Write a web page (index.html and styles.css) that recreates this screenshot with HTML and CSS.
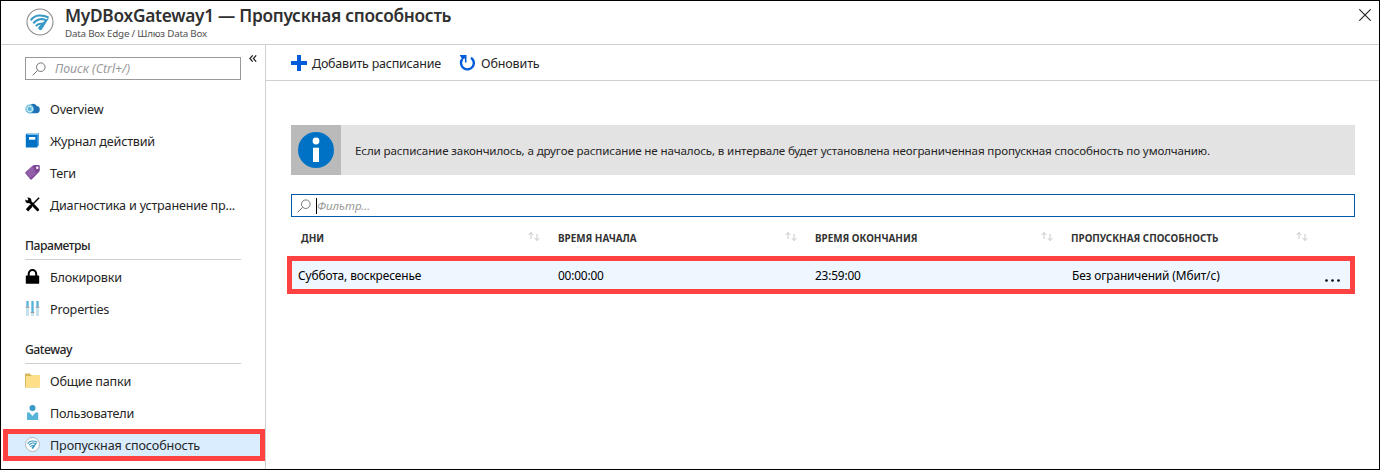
FILE: index.html
```html
<!DOCTYPE html>
<html lang="ru">
<head>
<meta charset="utf-8">
<title>MyDBoxGateway1 — Пропускная способность</title>
<link rel="stylesheet" href="styles.css">
</head>
<body>
<svg width="0" height="0" class="defs">
  <symbol id="search" viewBox="0 0 14 14"><circle cx="8.8" cy="5.2" r="4.3"/><path d="M5.7 8.3 0.6 13.4"/></symbol>
  <symbol id="wifi" viewBox="0 0 28 28">
    <circle cx="14" cy="14" r="13" fill="#fff" stroke="#8c8c8c" stroke-width="1.1"/>
    <g fill="none" stroke="#3999c6" stroke-width="2.1">
      <path d="M4.800 12.300Q8 7.800 13 7.500T22.500 9.500"/><path d="M7.300 15.400Q10 11.900 14 11.300T20.500 12.500"/><path d="M9.900 18.100Q12 15.400 17.500 15.500"/>
    </g>
    <path d="M23.300 9.500 16.300 20.700A2 2 0 1 1 13 18.600L20 11.500Z" fill="#3999c6"/>
  </symbol>
  <symbol id="sort" viewBox="0 0 12 9"><path d="M3 7V.5M.6 3 3 .5 5.400 3M9 2V8.500M6.600 6 9 8.500 11.400 6" fill="none" stroke="#c4c4c4" stroke-width=".9"/></symbol>
</svg>
<div class="window">
  <header class="header">
    <svg class="logo"><use href="#wifi"/></svg>
    <div class="titles">
      <h1 class="title">MyDBoxGateway1 — Пропускная способность</h1>
      <p class="subtitle">Data Box Edge / Шлюз Data Box</p>
    </div>
    <svg class="close" viewBox="0 0 12 12"><path d="M.3.3 11.700 11.700M11.700.3.3 11.700" stroke="#222" stroke-width="1.100"/></svg>
  </header>
  <div class="body">
    <nav class="sidebar">
      <div class="search-row">
        <div class="search"><svg class="search-icon"><use href="#search"/></svg><span>Поиск (Ctrl+/)</span></div>
        <svg class="collapse" viewBox="0 0 8 7"><path d="M3.700.3.900 3.500 3.700 6.700M7.200.3 4.400 3.500 7.200 6.700" fill="none" stroke="#222" stroke-width="1.200"/></svg>
      </div>
      <ul class="menu">
        <li class="item"><svg class="icon" viewBox="0 0 15 15"><path d="M5 12.200V4.500Q6 2.500 8.500 2.700 11 3 11.700 5 14.800 5.300 14.800 8.700 14.700 12 11.500 12.200Z" fill="#1f6fb5"/><circle cx="4.700" cy="8" r="4.400" fill="#59b4d9"/><circle cx="4.700" cy="8" r="2.700" fill="none" stroke="#e6f5fc" stroke-width="1.500" stroke-dasharray="1.500 .6"/></svg><span>Overview</span></li>
        <li class="item"><svg class="icon" viewBox="0 0 15 15"><path d="M2.500 0H14V13H2.500Z" fill="#59a7dc"/><path d="M.8 1.500Q.8.5 2.500.5V1.500H12.500V14.500H.8Z" fill="#0072c6"/><path d="M2.500 1H13" stroke="#d9ecf8"/><path d="M4 4H10.300V6.700H4Z" fill="#fff"/></svg><span>Журнал действий</span></li>
        <li class="item"><svg class="icon" viewBox="0 0 15 15"><path d="M.4 7.300 7.300.9Q8.200.1 9.500.1H13.500Q14.800.1 14.800 1.500V5.200Q14.800 6 14 6.900L6.700 14.400Q6 15 5.300 14.300L.5 8.600Q0 8 .4 7.300Z" fill="#804998"/><path d="M1 7.100 7.500 1 11 8.500 4.700 13.400Z" fill="#925eaa"/><circle cx="12.300" cy="2.800" r="1.200" fill="#fff"/></svg><span>Теги</span></li>
        <li class="item"><svg class="icon" viewBox="0 0 15 15"><path d="M4 3.800 12.700 12.800" stroke="#000" stroke-width="2.800" stroke-linecap="round"/><path d="M2.300.5 3.500 2.500 2.400 3.700.4 2.500Q-.2 5.700 2.500 6.300L5 6 6.500 3.500Q6 .2 2.300.5Z" fill="#000"/><path d="M14.100.7 6 9" stroke="#000" stroke-width="1.400"/><path d="M6.300 8.600 2 13.300" stroke="#000" stroke-width="3.200"/></svg><span>Диагностика и устранение пр...</span></li>
      </ul>
      <h2 class="group">Параметры</h2>
      <ul class="menu">
        <li class="item"><svg class="icon" viewBox="0 0 15 15"><path d="M3.700 7V5A3.700 3.900 0 0 1 11.200 5V7" fill="none" stroke="#000" stroke-width="2"/><rect x=".8" y="6.500" width="13.400" height="8.300" rx=".9"/></svg><span>Блокировки</span></li>
        <li class="item"><svg class="icon" viewBox="0 0 15 15"><path d="M1 0h3v15H1ZM6 0h3v15H6ZM11 0h3v15H11Z" fill="#c5e2ef"/><path d="M2.500 0V5.500M7.500 0V11M12.500 0V5.500" stroke="#59b4d9" stroke-width="2"/><path d="M.7 6.200H4.300M5.700 11.500H9.300M10.700 6.200H14.300" stroke="#999" stroke-width="1.200"/></svg><span>Properties</span></li>
      </ul>
      <h2 class="group">Gateway</h2>
      <ul class="menu">
        <li class="item"><svg class="icon" viewBox="0 0 15 15"><path d="M0 14.500V.5H5L6 2H14V14.500Z" fill="#d8b85f"/><path d="M1 14.500V3H6L7.500 2H15V14.500Z" fill="#fcdf87"/></svg><span>Общие папки</span></li>
        <li class="item"><svg class="icon" viewBox="0 0 15 15"><circle cx="7.500" cy="3" r="3" fill="#3999c6"/><path d="M2 7.500H4.500L7.500 11 10.500 7.500H13.200V15H2Z" fill="#59b4d9"/></svg><span>Пользователи</span></li>
        <li class="item selected"><svg class="icon"><use href="#wifi"/></svg><span>Пропускная способность</span></li>
      </ul>
    </nav>
    <main class="main">
      <div class="toolbar">
        <svg class="tool-icon" viewBox="0 0 16 16"><path d="M8 0V16M0 8H16" stroke="#015cda" stroke-width="4"/></svg><span class="add">Добавить расписание</span>
        <svg class="tool-icon" viewBox="0 0 16 16"><path d="M12 2.700A6.400 6.400 0 1 1 3.200 4.300" fill="none" stroke="#015cda" stroke-width="2.400"/><path d="M.7 0H7.500V7.500H5.900V3.300L3.500 4.700Z" fill="#015cda"/></svg><span class="refresh">Обновить</span>
      </div>
      <section class="content">
        <div class="notice">
          <div class="notice-mark"><svg class="info" viewBox="0 0 36 36"><circle cx="18" cy="18" r="18" fill="#0072c6"/><circle cx="18" cy="9" r="3.400" fill="#fff"/><path d="M15 15.700H21V30H15Z" fill="#fff"/></svg></div>
          <p class="notice-text">Если расписание закончилось, а другое расписание не началось, в интервале будет установлена неограниченная пропускная способность по умолчанию.</p>
        </div>
        <div class="filter"><svg class="search-icon"><use href="#search"/></svg><i class="caret"></i><span>Фильтр...</span></div>
        <div class="grid head">
          <div>ДНИ<svg class="sort"><use href="#sort"/></svg></div>
          <div>ВРЕМЯ НАЧАЛА<svg class="sort"><use href="#sort"/></svg></div>
          <div>ВРЕМЯ ОКОНЧАНИЯ<svg class="sort"><use href="#sort"/></svg></div>
          <div>ПРОПУСКНАЯ СПОСОБНОСТЬ<svg class="sort"><use href="#sort"/></svg></div>
        </div>
        <div class="grid row">
          <div>Суббота, воскресенье</div>
          <div class="time">00:00:00</div>
          <div class="time">23:59:00</div>
          <div>Без ограничений (Мбит/с)</div>
          <svg class="more" viewBox="0 0 15 3"><circle cx="1.500" cy="1.500" r="1.300"/><circle cx="7.500" cy="1.500" r="1.300"/><circle cx="13.500" cy="1.500" r="1.300"/></svg>
        </div>
      </section>
    </main>
  </div>
</div>
</body>
</html>
```
FILE: styles.css
```css
* { box-sizing: border-box; margin: 0; padding: 0; }
body { font: 12.2px/16px "Noto Sans", "Open Sans", sans-serif; color: #252525; }
.defs { position: absolute; }
svg { display: block; flex: none; }
span, p, h1, h2 { white-space: nowrap; }
.window { width: 1380px; height: 470px; border: 1px solid #000; background: #fff; display: flex; flex-direction: column; overflow: hidden; }
.header { height: 44px; flex: none; display: flex; align-items: flex-start; border-bottom: 1px solid #d0d0d0; padding: 7px 8px 0 25px; }
.logo { width: 28px; height: 28px; }
.titles { margin-left: 11px; flex: 1; }
.title { font-size: 17.3px; line-height: 18px; font-weight: 600; letter-spacing: -.28px; margin-top: -1px; color: #303030; }
.subtitle { font-size: 9.8px; line-height: 14px; color: #505050; letter-spacing: -.22px; margin-top: 2px; }
.close { width: 12px; height: 12px; margin-top: 1px; }
.body { display: flex; flex: 1; min-height: 0; }
.sidebar { width: 265px; border-right: 1px solid #d0d0d0; flex: none; }
.search-row { display: flex; padding: 12px 0 0 24px; align-items: flex-start; }
.search { width: 216px; height: 23px; border: 1px solid #999; display: flex; align-items: center; padding-left: 6px; font-style: italic; color: #999; }
.search span { margin-left: 9px; font-size: 12.3px; padding-top: 1px; }
.search-icon { width: 14px; height: 14px; fill: none; stroke: #777; stroke-width: 1; }
.collapse { width: 8px; height: 7px; margin: -2px 0 0 8px; }
.menu { list-style: none; }
.search-row + .menu { margin-top: 13px; }
.item { height: 32px; display: flex; align-items: center; padding-left: 24px; font-size: 12.6px; letter-spacing: -.2px; }
.icon { width: 15px; height: 15px; margin-right: 10px; margin-top: -1px; }
.item .icon + span { line-height: 18px; padding-top: 2px; }
.group { font-size: 12.2px; line-height: 20px; font-weight: 500; letter-spacing: -.5px; height: 24px; margin: 15px 24px 1px; border-bottom: 1px solid #d0d0d0; }
.selected { background: #daedff; margin: 0 0 0 2px; padding-left: 17px; border: 5px solid #fe4141; letter-spacing: -.12px; }
.main { flex: 1; min-width: 0; }
.toolbar { height: 36px; border-bottom: 1px solid #d0d0d0; display: flex; align-items: center; padding-left: 25px; font-size: 12.5px; letter-spacing: -.22px; }
.toolbar span { padding-top: 2px; }
.tool-icon { width: 16px; height: 16px; }
.add { margin: 0 18px 0 5px; width: 129px; }
.refresh { margin-left: 6px; letter-spacing: -.12px; }
.content { padding: 44px 24px 0 25px; }
.notice { height: 50px; display: flex; background: #e3e3e3; }
.notice-mark { width: 50px; background: #bababa; padding: 7px; }
.info { width: 36px; height: 36px; }
.notice-text { font-size: 11.6px; line-height: 51px; letter-spacing: -.137px; margin-left: 14px; }
.filter { height: 23px; margin-top: 19px; border: 1px solid #0058ad; display: flex; align-items: center; padding-left: 5px; font-size: 11.5px; font-style: italic; color: #999; }
.filter .caret { width: 1px; height: 16px; background: #000; margin: 0 -1px 0 5px; }
.filter span { margin-left: 1px; }
.grid { display: grid; grid-template-columns: 257px 257px 256px 1fr; align-items: center; }
.head { height: 39px; padding: 2px 0 0 10px; font-size: 9.9px; font-weight: 700; color: #333; }
.head div { display: flex; align-items: center; }
.sort { width: 12px; height: 9px; margin: -3px 18px 0 auto; }
.head div:last-child .sort { margin-right: 47px; }
.row { height: 38px; margin-left: -4px; border: 5px solid #fe4141; background: #eef6ff; color: #000; padding-left: 6px; font-size: 11.9px; letter-spacing: -.12px; grid-template-columns: 260px 257px 257px 1fr 25px; }
.time { letter-spacing: -.2px; }
.more { width: 15px; height: 3px; margin-top: 10px; }
```
